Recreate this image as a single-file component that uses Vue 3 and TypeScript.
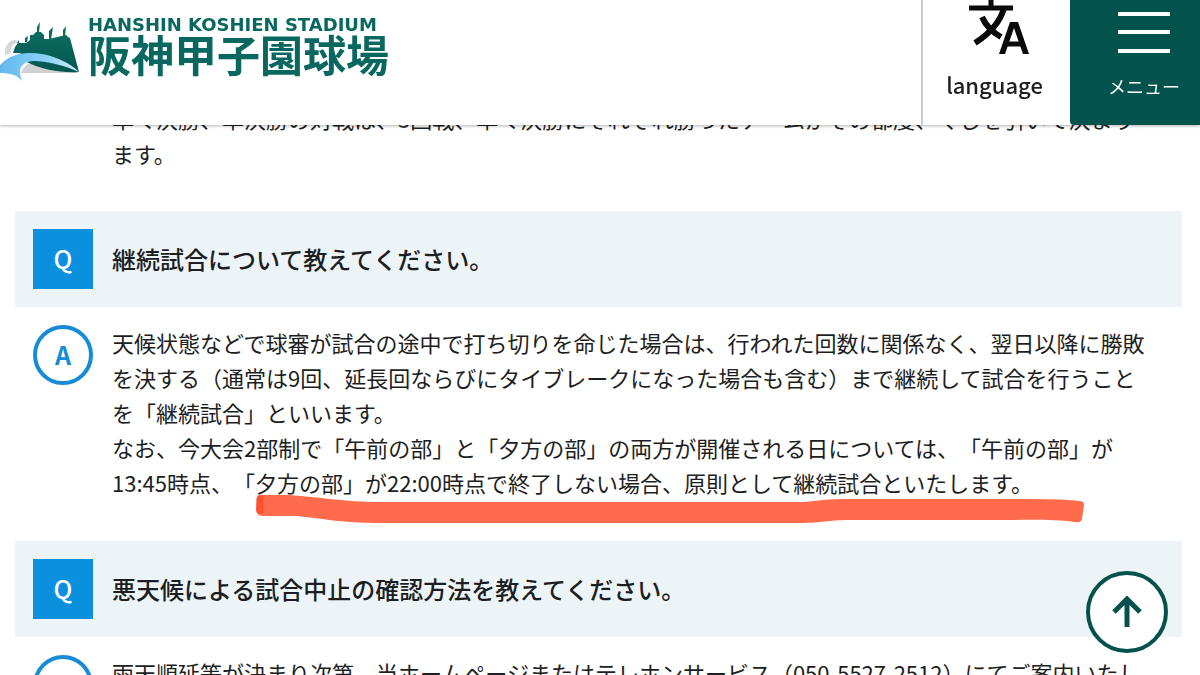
<script setup lang="ts">
interface Faq {
  id: string
  question: string
  answer: string
  marked: boolean
}

const previousAnswer =
  '準々決勝、準決勝の対戦は、3回戦、準々決勝にそれぞれ勝ったチームがその都度、くじを引いて決まり\nます。'

const faqs: Faq[] = [
  {
    id: 'suspended',
    question: '継続試合について教えてください。',
    answer:
      '天候状態などで球審が試合の途中で打ち切りを命じた場合は、行われた回数に関係なく、翌日以降に勝敗\n' +
      'を決する（通常は9回、延長回ならびにタイブレークになった場合も含む）まで継続して試合を行うこと\n' +
      'を「継続試合」といいます。\n' +
      'なお、今大会2部制で「午前の部」と「夕方の部」の両方が開催される日については、「午前の部」が\n' +
      '13:45時点、「夕方の部」が22:00時点で終了しない場合、原則として継続試合といたします。',
    marked: true,
  },
  {
    id: 'weather',
    question: '悪天候による試合中止の確認方法を教えてください。',
    answer:
      '雨天順延等が決まり次第、当ホームページまたはテレホンサービス（050-5527-2512）にてご案内いたし\nます。',
    marked: false,
  },
]

function scrollToTop(): void {
  window.scrollTo({ top: 0, behavior: 'smooth' })
}
</script>

<template>
  <div class="page">
    <header class="header">
      <a class="brand" href="#">
        <svg class="brand-mark" viewBox="0 0 80 64" aria-hidden="true">
          <defs>
            <linearGradient id="stand" x1="0" y1="0" x2="0" y2="1">
              <stop offset="0" stop-color="#0b6b60" />
              <stop offset="1" stop-color="#05564f" />
            </linearGradient>
            <linearGradient id="wave" x1="0" y1="0" x2="1" y2="0">
              <stop offset="0" stop-color="#62b8ee" />
              <stop offset="0.6" stop-color="#8dd2f8" />
              <stop offset="1" stop-color="#d8f1fd" />
            </linearGradient>
          </defs>
          <path d="M5 38C4 29 9 23 15 23L19 25C14 25 10 30 11 36Z" fill="#d5d7d8" />
          <path d="M21 56C25 46 32 43 42 46L79 56Z" fill="#cfd1d2" />
          <path
            d="M13 36L15 30L18 26L26 26L30 23L30 18L33 18L36 15H41L44 18V22L49 22L66 18L68 20L70 21L79 55C62 56 42 53 27 45L20 36Z"
            fill="url(#stand)"
          />
          <path
            d="M17 26L19 23L19 27ZM25 25V21L28 19L27 25ZM37 16V10L40 5L39 16ZM49 23V14L53 10L51 23ZM63 20V13L66 9L65 20Z"
            fill="#0a6b60"
          />
          <path
            d="M0 48C10 37 24 34 42 37C58 40 71 47 79 55C64 48 46 44 34 44C25 44 19 49 20 57L22 64C17 58 11 56 0 56Z"
            fill="url(#wave)"
          />
        </svg>
        <span class="brand-text">
          <span class="brand-en">HANSHIN KOSHIEN STADIUM</span>
          <span class="brand-ja">阪神甲子園球場</span>
        </span>
      </a>
      <button class="tool language" type="button">
        <svg class="language-icon" viewBox="0 0 60 56" aria-hidden="true">
          <g fill="none" stroke="#0a0a0a">
            <path d="M22 0V8M0 8H44" stroke-width="5" />
            <path d="M35 8C31 23 20 34 6 43M13 17C17 26 23 32 32 37" stroke-width="6" />
            <path d="M36 44H54" stroke-width="5" />
          </g>
          <path d="M41 22H49L60 54H54L45 28L36 54H30Z" fill="#0a0a0a" />
        </svg>
        <span>language</span>
      </button>
      <button class="tool menu" type="button">
        <svg class="menu-icon" viewBox="0 0 54 42" aria-hidden="true">
          <path d="M1 3H53M1 21H53M1 40H53" stroke="#fff" stroke-width="4" />
        </svg>
        <span>メニュー</span>
      </button>
    </header>

    <main class="content">
      <p class="answer-text previous">{{ previousAnswer }}</p>
      <section v-for="faq in faqs" :key="faq.id" class="faq">
        <h2 class="question">
          <span class="badge badge-q">Q</span>
          <span>{{ faq.question }}</span>
        </h2>
        <div class="answer">
          <span class="badge badge-a">A</span>
          <p class="answer-text">{{ faq.answer }}</p>
          <svg v-if="faq.marked" class="marker" viewBox="0 0 830 32" aria-hidden="true">
            <path
              d="M2 6Q3 2 8 3L34 3C65 5 88 10 125 10H545C560 10 565 7 590 7H775Q810 7 824 9Q829 9 829 13L827 27Q826 31 820 30C795 27 780 28 750 28H595C570 28 570 31 545 31H120C90 31 70 27 42 24H7Q1 23 1 18Z"
              fill="#ff6b4b"
            />
            <path d="M5 7V18" stroke="#ff5130" stroke-width="7" stroke-linecap="round" />
          </svg>
        </div>
      </section>
    </main>

    <button class="to-top" type="button" aria-label="ページの先頭へ" @click="scrollToTop">
      <svg viewBox="0 0 32 32" aria-hidden="true">
        <path d="M16 31V4M3 16L16 3L29 16" fill="none" stroke="#05524d" stroke-width="5" />
      </svg>
    </button>
  </div>
</template>

<style>
body {
  margin: 0;
  background: #fff;
}
</style>

<style scoped>
.page {
  height: 100vh;
  overflow: hidden;
  color: #1c1e22;
  font-family: "Noto Sans CJK JP", sans-serif;
  text-spacing-trim: space-all;
}

.header {
  position: fixed;
  z-index: 2;
  top: 0;
  left: 0;
  right: 0;
  display: flex;
  height: 125px;
  background: #fff;
  box-shadow: 0 1px 3px rgba(0, 0, 0, 0.3);
}

.brand {
  display: flex;
  align-items: flex-start;
  flex: 1;
  gap: 8px;
  padding-top: 17px;
  color: #08675f;
  text-decoration: none;
}

.brand-mark {
  width: 80px;
  height: 64px;
}

.brand-text {
  display: flex;
  flex-direction: column;
  white-space: nowrap;
}

.brand-en {
  font: 700 18px/16px "DejaVu Sans", sans-serif;
}

.brand-ja {
  font-size: 43px;
  font-weight: 700;
  line-height: 40px;
}

.tool {
  display: flex;
  flex-direction: column;
  align-items: center;
  box-sizing: border-box;
  margin: 0;
  padding: 0;
  border: 0;
  background: none;
  color: inherit;
  font-family: inherit;
}

.language {
  width: 149px;
  border-left: 2px solid #ccc;
  font-size: 22px;
  font-weight: 500;
  line-height: 32px;
  padding-right: 4px;
}

.language-icon {
  width: 60px;
  height: 56px;
  margin-bottom: 12px;
  margin-left: 8px;
}

.menu {
  width: 130px;
  padding: 11px 0 0 18px;
  border-bottom-left-radius: 4px;
  background: #02524e;
  color: #fff;
  font-size: 18px;
  line-height: 28px;
}

.menu-icon {
  width: 54px;
  height: 42px;
  margin-bottom: 19px;
}

.content {
  padding: 101px 18px 0 15px;
}

.answer-text {
  margin: 0;
  font-size: 22px;
  line-height: 35px;
  white-space: pre-line;
}

.previous {
  padding: 0 0 40px 97px;
}

.question {
  display: flex;
  align-items: center;
  gap: 19px;
  margin: 0;
  padding: 18px;
  background: #ecf4f8;
  font-size: 24px;
  font-weight: 500;
  line-height: 36px;
}

.badge {
  display: flex;
  flex: none;
  align-items: center;
  justify-content: center;
  box-sizing: border-box;
  width: 60px;
  height: 60px;
  padding-bottom: 2px;
  font-size: 25px;
  font-weight: 500;
  line-height: 36px;
}

.badge-q {
  background: #0b90de;
  color: #fff;
}

.badge-a {
  border: 4px solid #168bd6;
  border-radius: 50%;
  color: #168bd6;
  font-weight: 700;
}

.answer {
  position: relative;
  display: flex;
  gap: 19px;
  padding: 18px 0 41px 18px;
}

.marker {
  position: absolute;
  left: 240px;
  bottom: 17px;
  width: 830px;
  height: 32px;
}

.to-top {
  position: fixed;
  z-index: 1;
  right: 32px;
  bottom: 22px;
  display: flex;
  align-items: center;
  justify-content: center;
  box-sizing: border-box;
  width: 82px;
  height: 82px;
  padding: 0;
  border: 4px solid #05524d;
  border-radius: 50%;
  background: #fff;
}

.to-top svg {
  width: 32px;
  height: 32px;
}
</style>
